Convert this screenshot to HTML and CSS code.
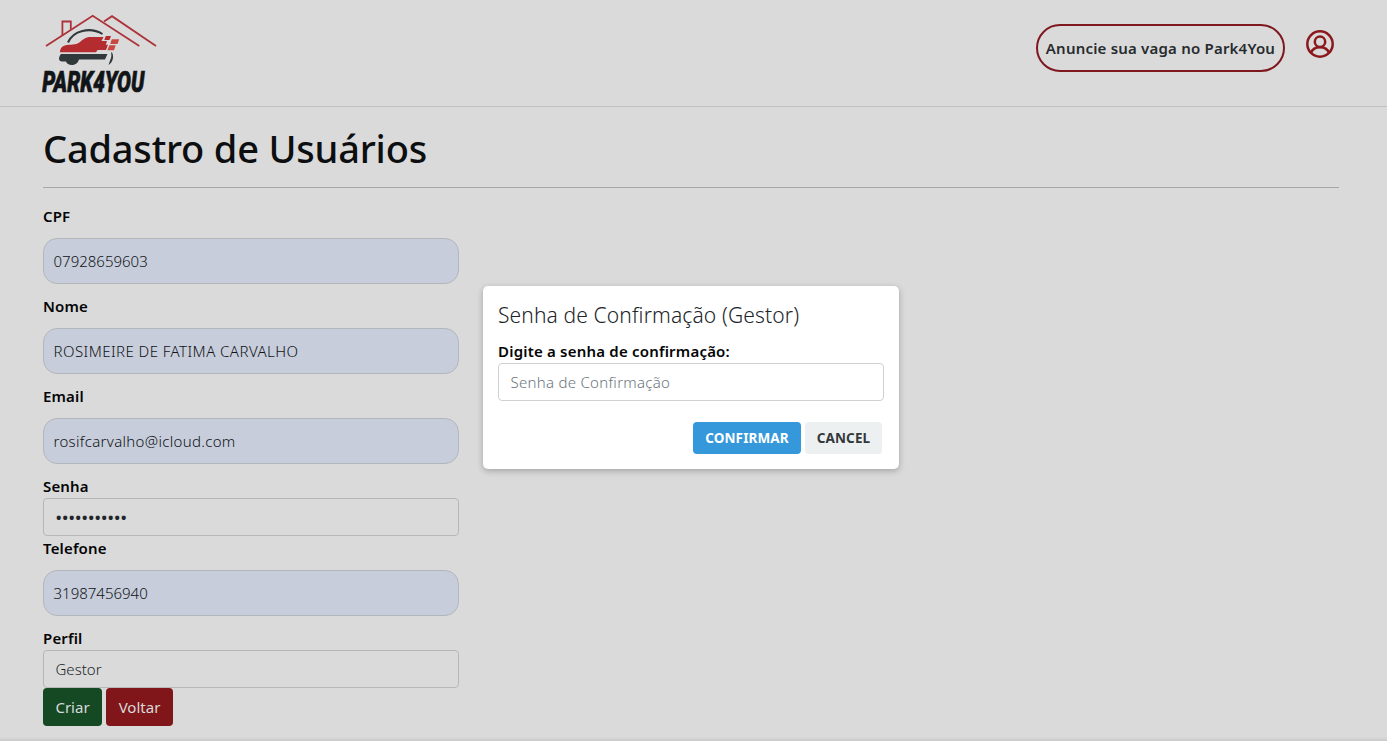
FILE: index.html
```html
<!DOCTYPE html>
<html lang="pt-BR">
<head>
<meta charset="utf-8">
<title>Park4You - Cadastro de Usuários</title>
<link rel="stylesheet" href="styles.css">
</head>
<body>
<header class="header">
  <svg class="logo" viewBox="40 12 120 92" role="img" aria-label="Park4You">
    <g fill="none" stroke="#ad333a" stroke-width="1.8">
      <path d="M46 46 92.700 15.700 139.300 46"/>
      <path d="M104 21.500 112 16.200 156 46"/>
      <path d="M62.400 35V21.500H70.800V29.500"/>
    </g>
    <path d="M68 42.500C73 30.500 90 26.500 102.500 34" fill="none" stroke="#31383b" stroke-width="2"/>
    <path d="M60 52.300C60 47.500 63 45.500 67 45 73 44.500 77 44.500 80 42 84 38.500 86 37 91 37H103.500L101.500 41H107L105.800 44.800H108L106 50H97.500L96 52.300Z" fill="#b42b30"/>
    <path d="M61 54H107.500L105 59.500H79C77 67 67 66 66 61.500H62C58.500 61.500 58 57.500 61 54Z" fill="#31383b"/>
    <path d="M112 52.500C114.500 57 112.500 62.500 108.500 65L110 60.500C111.500 57.500 111.700 55 111 52.500Z" fill="#31383b"/>
    <path d="M105.800 36H111L109.500 40H104.300Z" fill="#b42b30"/>
    <path d="M111.800 39.300H119.200L117.500 44H110.200ZM109.300 45.300H115.700L114 50.200H107.400Z" fill="#c9473f"/>
    <text class="logo-text" transform="translate(42.300 92) scale(.69 1)">PARK4YOU</text>
  </svg>
  <div class="actions">
    <button class="announce">Anuncie sua vaga no Park4You</button>
    <svg class="user" viewBox="0 0 28 28" fill="none" stroke="#8b181d" stroke-width="2.500">
      <circle cx="14" cy="14" r="12.700"/>
      <circle cx="14" cy="11.800" r="5.200"/>
      <path d="M5 22.800C6.500 18.800 10 17.200 14 17.200S21.500 18.800 23 22.800"/>
    </svg>
  </div>
</header>
<main class="main">
  <h1>Cadastro de Usuários</h1>
  <form class="form">
    <label>CPF</label>
    <div class="field filled"><span>07928659603</span></div>
    <label>Nome</label>
    <div class="field filled"><span class="name">ROSIMEIRE DE FATIMA CARVALHO</span></div>
    <label>Email</label>
    <div class="field filled"><span class="email">rosifcarvalho@icloud.com</span></div>
    <label>Senha</label>
    <div class="field plain"><span class="dots">•••••••••••</span></div>
    <label>Telefone</label>
    <div class="field filled"><span>31987456940</span></div>
    <label>Perfil</label>
    <div class="field plain"><span>Gestor</span></div>
    <div class="buttons">
      <button class="btn create" type="button">Criar</button>
      <button class="btn back" type="button">Voltar</button>
    </div>
  </form>
</main>
<div class="bottom-edge"></div>
<section class="dialog">
  <h2>Senha de Confirmação (Gestor)</h2>
  <label class="prompt-label">Digite a senha de confirmação:</label>
  <div class="field plain prompt"><span>Senha de Confirmação</span></div>
  <div class="dialog-buttons">
    <button class="confirm">CONFIRMAR</button>
    <button class="cancel">CANCEL</button>
  </div>
</section>
</body>
</html>
```
FILE: styles.css
```css
* { box-sizing: border-box; }
body {
  margin: 0;
  height: 741px;
  overflow: hidden;
  position: relative;
  background: #dadada;
  color: #212529;
  font: 15px/24px "Noto Sans", "Open Sans", sans-serif;
}
button { font-family: inherit; white-space: nowrap; padding: 0; }
span { white-space: nowrap; }
.header {
  height: 107px;
  border-bottom: 1px solid #c2c2c2;
  padding: 12px 53px 0 40px;
  display: flex;
  justify-content: space-between;
  align-items: flex-start;
}
.logo { width: 120px; height: 92px; overflow: visible; }
.logo-text { font: italic 900 30px Roboto, sans-serif; fill: #111517; stroke: #111517; stroke-width: .7; }
.actions { display: flex; gap: 21px; padding-top: 12px; }
.announce {
  width: 249px;
  height: 48px;
  border: 2px solid #7f171e;
  border-radius: 24px;
  background: transparent;
  color: #272b2e;
  font-size: 15px;
  font-weight: 600;
  letter-spacing: .2px;
}
.user { width: 28px; height: 28px; margin-top: 6px; }
.main { padding: 17px 48px 0 43px; }
h1 {
  margin: 0;
  height: 64px;
  border-bottom: 1px solid #a5a8a8;
  font-size: 38px;
  line-height: 48px;
  font-weight: 500;
  letter-spacing: -.2px;
  color: #0c0e10;
}
.form { width: 416px; padding-top: 16px; display: flex; flex-direction: column; }
label { display: block; height: 24px; color: #050505; font-size: 15px; font-weight: 600; letter-spacing: .15px; }
.field { display: flex; align-items: center; font-weight: 350; border: 1px solid #b4b7b9; }
.filled { height: 46px; margin: 10px 0; padding-left: 9.5px; border-radius: 14px; background: #c7cdda; color: #101318; }
.plain { height: 38px; padding-left: 11.5px; border-radius: 4px; }
.name { letter-spacing: .45px; }
.email { letter-spacing: .32px; }
.dots { font-size: 17px; font-weight: 500; letter-spacing: .1px; padding-top: 2px; }
.buttons { display: flex; gap: 4px; }
.btn { height: 38px; border: 0; border-radius: 4px; color: #dadada; font-size: 15px; }
.create { width: 59px; background: #154924; }
.back { width: 67px; background: #801619; }
.bottom-edge { position: absolute; left: 0; right: 0; bottom: 0; height: 4px; background: linear-gradient(#dadada, #c9c9c9); }
.dialog {
  position: absolute;
  left: 483px;
  top: 286px;
  width: 416px;
  height: 183px;
  padding: 15px;
  border-radius: 5px;
  background: #fff;
  box-shadow: 0 2px 6px rgba(0, 0, 0, .25);
}
h2 { margin: 0 0 10px; height: 28px; font-size: 21px; line-height: 28px; font-weight: 300; letter-spacing: .13px; }
.prompt-label { letter-spacing: .2px; }
.prompt { border-color: #ced1d4; color: #6c757d; letter-spacing: .28px; }
.dialog-buttons { display: flex; justify-content: flex-end; gap: 4px; padding: 21px 2px 0 0; }
.confirm, .cancel { height: 32px; border: 0; border-radius: 4px; font-size: 13.5px; font-weight: 700; letter-spacing: .12px; }
.confirm { width: 108px; background: #3498db; color: #fff; }
.cancel { width: 77px; background: #ecf0f1; color: #33383b; }
```
